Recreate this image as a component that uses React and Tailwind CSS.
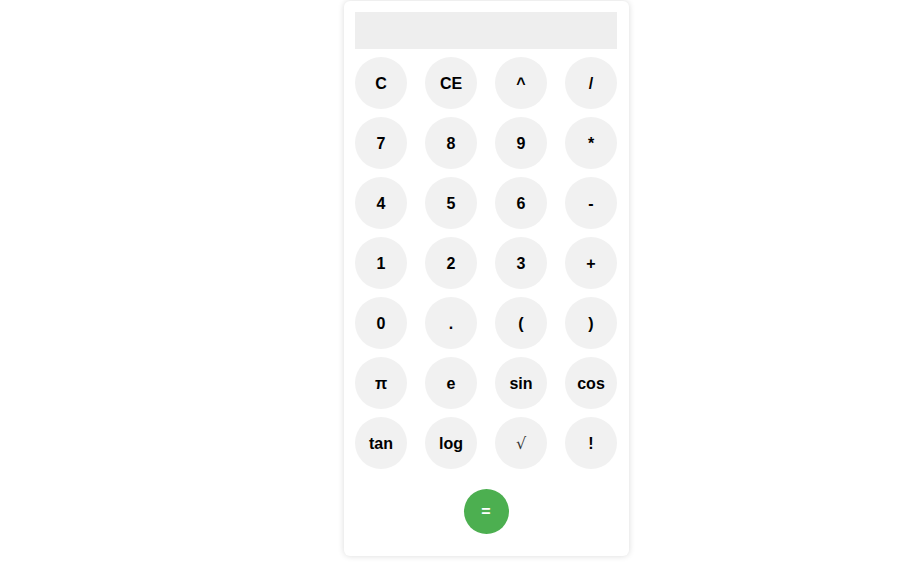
const rows = [
  ['C', 'CE', '^', '/'],
  ['7', '8', '9', '*'],
  ['4', '5', '6', '-'],
  ['1', '2', '3', '+'],
  ['0', '.', '(', ')'],
  ['π', 'e', 'sin', 'cos'],
  ['tan', 'log', '√', '!'],
];

export default function App() {
  return (
    <div className="min-h-[569px] bg-white flex justify-center pl-[51px] pt-px" style={{ fontFamily: '"Liberation Sans", Arial, sans-serif' }}>
      <div className="w-[285px] h-[555px] bg-white rounded-md shadow-[0_0_6px_rgba(0,0,0,0.15)] pl-[11px] pr-[12px] pt-[11px]">
        <div className="h-[37px] bg-[#eeeeee]" />
        <div className="mt-2 grid grid-cols-4 gap-x-[18px] gap-y-2">
          {rows.flat().map((k) =>
            k === '√' ? (
              <button key={k} className="w-[52px] h-[52px] pt-[2px] rounded-full bg-[#f1f1f1] text-[16px] text-[#333] font-normal" style={{ fontFamily: '"DejaVu Serif", serif' }}>
                {k}
              </button>
            ) : (
              <button key={k} className="w-[52px] h-[52px] pt-[2px] rounded-full bg-[#f1f1f1] text-[16px] font-bold text-black">
                {k}
              </button>
            )
          )}
        </div>
        <div className="flex justify-center mt-5">
          <button className="w-[45px] h-[45px] rounded-full bg-[#4caf50] text-white font-bold text-[16px]">=</button>
        </div>
      </div>
    </div>
  );
}
